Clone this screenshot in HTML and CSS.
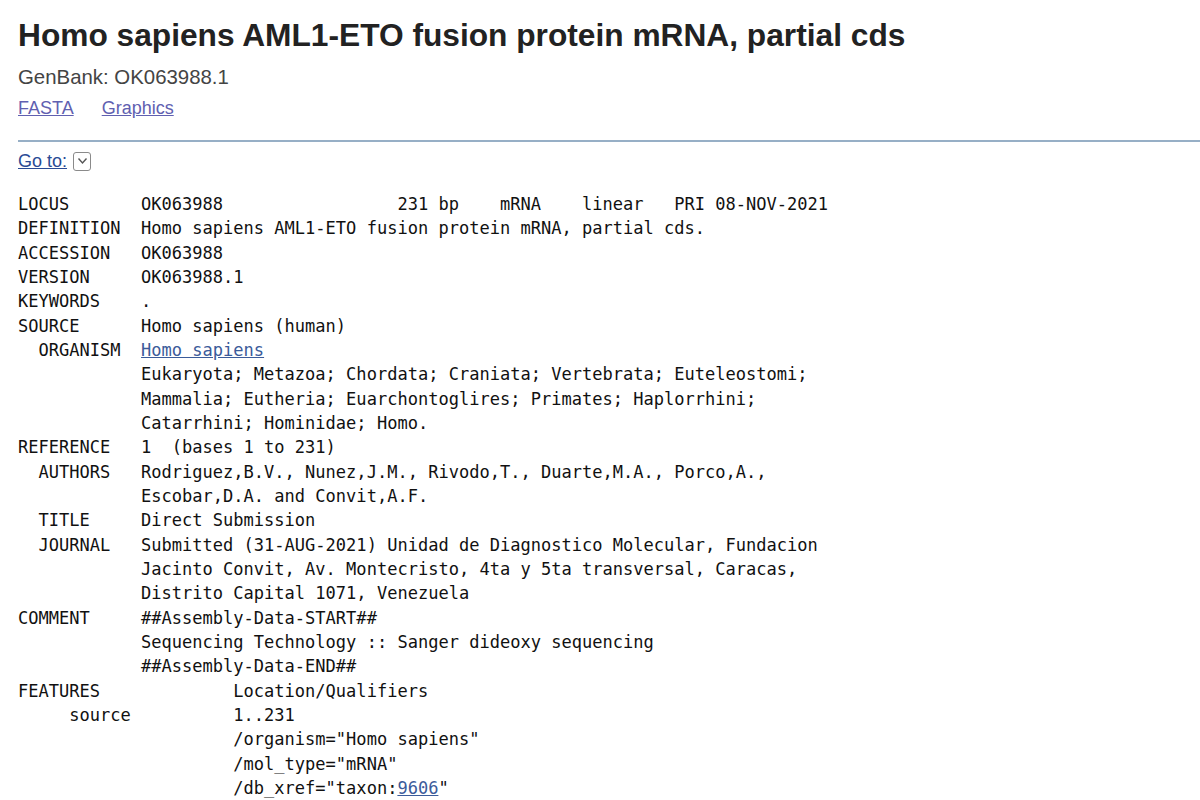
FILE: index.html
```html
<!DOCTYPE html>
<html>
<head>
<meta charset="utf-8">
<link rel="stylesheet" href="styles.css">
</head>
<body>
<div class="page">
  <h1 class="title">Homo sapiens AML1-ETO fusion protein mRNA, partial cds</h1>
  <div class="accn">GenBank: OK063988.1</div>
  <div class="links">
    <a href="#" class="vlink">FASTA</a>
    <a href="#" class="vlink">Graphics</a>
  </div>
  <hr class="rule">
  <div class="goto">
    <a href="#" class="goto-link">Go to:</a>
    <span class="goto-btn"><svg width="11" height="8" viewBox="0 0 11 8"><path d="M1.5 1.5 L5.5 6 L9.5 1.5" fill="none" stroke="#555" stroke-width="1.4"/></svg></span>
  </div>
<pre class="gb">LOCUS       OK063988                 231 bp    mRNA    linear   PRI 08-NOV-2021
DEFINITION  Homo sapiens AML1-ETO fusion protein mRNA, partial cds.
ACCESSION   OK063988
VERSION     OK063988.1
KEYWORDS    .
SOURCE      Homo sapiens (human)
  ORGANISM  <a href="#" class="plink">Homo sapiens</a>
            Eukaryota; Metazoa; Chordata; Craniata; Vertebrata; Euteleostomi;
            Mammalia; Eutheria; Euarchontoglires; Primates; Haplorrhini;
            Catarrhini; Hominidae; Homo.
REFERENCE   1  (bases 1 to 231)
  AUTHORS   Rodriguez,B.V., Nunez,J.M., Rivodo,T., Duarte,M.A., Porco,A.,
            Escobar,D.A. and Convit,A.F.
  TITLE     Direct Submission
  JOURNAL   Submitted (31-AUG-2021) Unidad de Diagnostico Molecular, Fundacion
            Jacinto Convit, Av. Montecristo, 4ta y 5ta transversal, Caracas,
            Distrito Capital 1071, Venezuela
COMMENT     ##Assembly-Data-START##
            Sequencing Technology :: Sanger dideoxy sequencing
            ##Assembly-Data-END##
FEATURES             Location/Qualifiers
     source          1..231
                     /organism="Homo sapiens"
                     /mol_type="mRNA"
                     /db_xref="taxon:<a href="#" class="plink">9606</a>"
</pre>
</div>
</body>
</html>
```

FILE: styles.css
```css
html, body {
  margin: 0;
  padding: 0;
  background: #ffffff;
}
.page {
  padding-left: 18px;
  font-family: "Liberation Sans", Arial, sans-serif;
  color: #222;
}
.title {
  margin: 16px 0 0;
  font-size: 31.7px;
  line-height: 38px;
  font-weight: 700;
  color: #222;
}
.accn {
  margin-top: 11px;
  font-size: 20.4px;
  line-height: 24px;
  color: #444;
}
.links {
  margin-top: 7px;
  font-size: 18px;
  line-height: 24px;
  display: flex;
  gap: 28px;
}
.vlink {
  color: #6060b0;
  text-decoration: underline;
}
.rule {
  margin: 20px 0 0;
  border: 0;
  height: 2px;
  background: #97afc6;
}
.goto {
  margin-top: 7px;
  display: flex;
  align-items: center;
  gap: 6px;
  font-size: 18px;
  line-height: 24px;
}
.goto-link {
  color: #2a4b95;
  text-decoration: underline;
}
.goto-btn {
  width: 16px;
  height: 17px;
  border: 1px solid #8a8a8a;
  border-radius: 3px;
  display: flex;
  align-items: center;
  justify-content: center;
  background: #fff;
}
.gb {
  margin: 19px 0 0;
  font-family: "DejaVu Sans Mono", "Liberation Mono", monospace;
  font-size: 17.04px;
  line-height: 24.33px;
  color: #111;
}
.plink {
  color: #3b5b9a;
  text-decoration: underline;
}
```
